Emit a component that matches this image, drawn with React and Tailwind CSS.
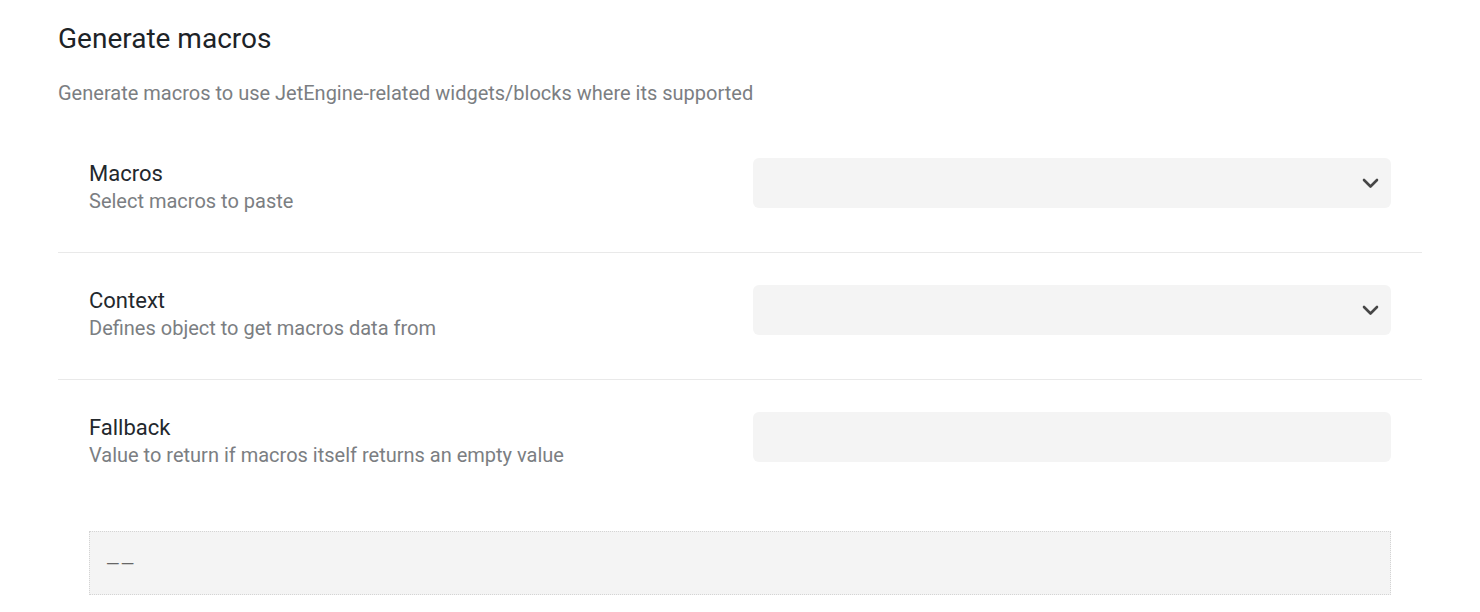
const rows = [
  { label: 'Macros', desc: 'Select macros to paste', type: 'select' },
  { label: 'Context', desc: 'Defines object to get macros data from', type: 'select' },
  { label: 'Fallback', desc: 'Value to return if macros itself returns an empty value', type: 'text' },
];

function Chevron() {
  return (
    <svg width="17" height="11" viewBox="0 0 17 11" className="shrink-0">
      <path d="M2 2 L8.5 8.5 L15 2" fill="none" stroke="#464646" strokeWidth="2.6" strokeLinecap="round" strokeLinejoin="round" />
    </svg>
  );
}

function Row({ row, last }) {
  return (
    <div className={`flex items-start px-[31px] pt-[32px] pb-[38px] ${last ? '' : 'border-b border-[#e9e9e9]'}`}>
      {/* Label */}
      <div className="w-[664px] shrink-0 pt-[2px]">
        <div className="text-[22px] leading-[28px] text-[#23282d]">{row.label}</div>
        <div className="text-[20px] leading-[26px] text-[#7b7e82]">{row.desc}</div>
      </div>

      {/* Control */}
      <div className="flex-1 h-[50px] rounded-[6px] bg-[#f4f4f4] flex items-center justify-end pr-[12px]">
        {row.type === 'select' && <Chevron />}
      </div>
    </div>
  );
}

export default function App() {
  return (
    <div className="min-h-[612px] bg-white pl-[58px] pr-[58px] pt-[22px]" style={{ fontFamily: 'Roboto, "Liberation Sans", sans-serif' }}>
      <h2 className="text-[28px] leading-[33px] text-[#1d2327] font-normal">Generate macros</h2>
      <p className="mt-[26px] text-[20px] leading-[24px] text-[#7b7e82]">
        Generate macros to use JetEngine-related widgets/blocks where its supported
      </p>

      <div className="mt-[21px]">
        {rows.map((r, i) => (
          <Row key={r.label} row={r} last={i === rows.length - 1} />
        ))}
      </div>

      {/* Result */}
      <div className="px-[31px] mt-[25px]">
        <div className="h-[64px] bg-[#f4f4f4] border border-dotted border-[#d4d4d4] flex items-center pl-[17px] pb-[3px]">
          <span className="text-[21px] leading-[24px] tracking-[3px] text-[#666666]" style={{ fontFamily: '"Liberation Sans", sans-serif' }}>––</span>
        </div>
      </div>
    </div>
  );
}
